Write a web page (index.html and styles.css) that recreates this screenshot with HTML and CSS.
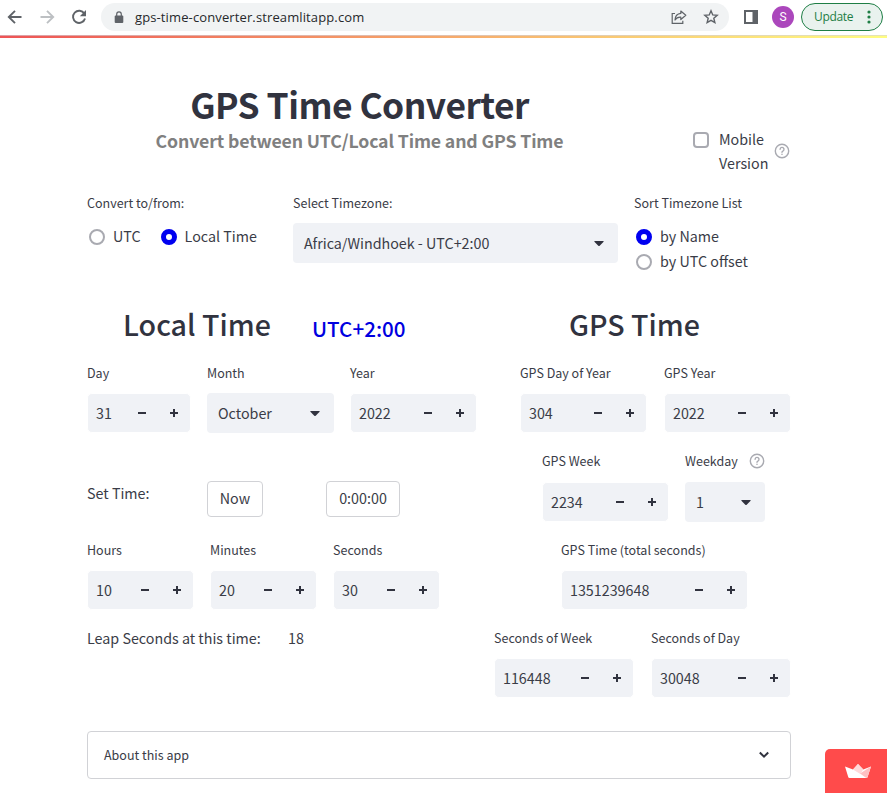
FILE: index.html
```html
<!DOCTYPE html>
<html lang="en">
<head>
<meta charset="utf-8">
<title>GPS Time Converter</title>
<link rel="stylesheet" href="styles.css">
</head>
<body>
<svg class="defs" width="0" height="0">
  <symbol id="minus" viewBox="0 0 8 8"><path d="M0 3h8v2H0z"/></symbol>
  <symbol id="plus" viewBox="0 0 8 8"><path d="M3 0h2v3H8v2H5V8H3V5H0V3h3z"/></symbol>
  <symbol id="caret" viewBox="0 0 10 6"><path d="M.8 0h8.400q.8.100.4.800L5.700 4.700q-.7.700-1.400 0L.4.800Q0 .1.800 0z"/></symbol>
  <symbol id="help" viewBox="0 0 16 16"><g fill="none" stroke="#a9aab1" stroke-width="1.400" stroke-linecap="round"><circle cx="8" cy="8" r="6.700"/><path d="M6.100 6.200a1.950 1.950 0 1 1 2.800 1.850c-.6.300-.9.600-.9 1.150M8 11.300v.1"/></g></symbol>
</svg>
<header class="toolbar">
  <nav class="nav">
    <svg width="16" height="16" viewBox="0 0 16 16" fill="none" stroke="#5f6368" stroke-width="1.900"><path d="M14.500 8H2M8 1.800L1.800 8 8 14.200"/></svg>
    <svg width="16" height="16" viewBox="0 0 16 16" fill="none" stroke="#bdc0c3" stroke-width="1.900"><path d="M1.500 8H14M8 1.800L14.200 8 8 14.200"/></svg>
    <svg width="16" height="16" viewBox="0 0 16 16"><path d="M13.300 4.600A6.100 6.100 0 1 0 14 9.500" fill="none" stroke="#5f6368" stroke-width="1.900"/><path d="M15 1v6.200H8.800z" fill="#5f6368"/></svg>
  </nav>
  <div class="omnibox">
    <svg width="10" height="13" viewBox="0 0 10 13"><rect x=".7" y="4.500" width="8.600" height="7.500" rx="1" fill="#5f6368"/><path d="M2.700 5V3.200a2.300 2.300 0 0 1 4.600 0V5" fill="none" stroke="#5f6368" stroke-width="1.200"/></svg>
    <span class="url">gps-time-converter.streamlitapp.com</span>
    <svg width="16" height="16" viewBox="0 0 16 16" fill="none" stroke="#5f6368" stroke-width="1.200"><path d="M4 4.500H1.200v9.800h10.600v-2.500"/><path d="M9.800 2l5 4.300-5 4.200V8.200C7 8 5.300 8.900 4 11c.2-3.700 2.200-6.200 5.800-6.600z" stroke-linejoin="round"/></svg>
    <svg class="star" width="16" height="16" viewBox="0 0 16 16" fill="none" stroke="#5f6368" stroke-width="1.400"><path d="M8 1.800l1.750 4.100 4.450.4-3.400 2.950 1.050 4.350L8 11.300l-3.850 2.300L5.200 9.250 1.800 6.300l4.450-.4z"/></svg>
  </div>
  <svg class="panel" width="14" height="14" viewBox="0 0 14 14"><path d="M0 0h14v14H0zM2 2v10h6.500V2z" fill="#5f6368" fill-rule="evenodd"/></svg>
  <span class="avatar">S</span>
  <span class="update"><span class="update-text">Update</span><svg width="4" height="14" viewBox="0 0 4 14" fill="#1e7e45"><circle cx="2" cy="2" r="1.600"/><circle cx="2" cy="7" r="1.600"/><circle cx="2" cy="12" r="1.600"/></svg></span>
</header>
<div class="rainbow"></div>
<main class="page">
  <section class="intro">
    <div class="titles">
      <h1>GPS Time Converter</h1>
      <p class="subtitle">Convert between UTC/Local Time and GPS Time</p>
    </div>
    <label class="mobile"><span class="box"></span><span class="mobile-text">Mobile Version</span><svg width="16" height="16"><use href="#help"/></svg></label>
  </section>
  <section class="options">
    <div class="field convert">
      <span class="label">Convert to/from:</span>
      <div class="radios inline"><span class="radio">UTC</span><span class="radio on">Local Time</span></div>
    </div>
    <div class="field timezone">
      <span class="label">Select Timezone:</span>
      <div class="select">Africa/Windhoek - UTC+2:00<svg width="10" height="6"><use href="#caret"/></svg></div>
    </div>
    <div class="field sort">
      <span class="label">Sort Timezone List</span>
      <div class="radios"><span class="radio on">by Name</span><span class="radio">by UTC offset</span></div>
    </div>
  </section>
  <section class="columns">
    <div class="local">
      <div class="heading"><h2>Local Time</h2><span class="offset">UTC+2:00</span></div>
      <div class="row date">
        <div class="field day"><span class="label">Day</span><div class="number"><span>31</span><svg><use href="#minus"/></svg><svg><use href="#plus"/></svg></div></div>
        <div class="field month"><span class="label">Month</span><div class="select">October<svg width="10" height="6"><use href="#caret"/></svg></div></div>
        <div class="field year"><span class="label">Year</span><div class="number"><span>2022</span><svg><use href="#minus"/></svg><svg><use href="#plus"/></svg></div></div>
      </div>
      <div class="row set-time"><span class="set-label">Set Time:</span><button class="now">Now</button><button class="zero">0:00:00</button></div>
      <div class="row time">
        <div class="field"><span class="label">Hours</span><div class="number"><span>10</span><svg><use href="#minus"/></svg><svg><use href="#plus"/></svg></div></div>
        <div class="field"><span class="label">Minutes</span><div class="number"><span>20</span><svg><use href="#minus"/></svg><svg><use href="#plus"/></svg></div></div>
        <div class="field"><span class="label">Seconds</span><div class="number"><span>30</span><svg><use href="#minus"/></svg><svg><use href="#plus"/></svg></div></div>
      </div>
      <div class="row leap"><span class="leap-label">Leap Seconds at this time:</span><span>18</span></div>
    </div>
    <div class="gps">
      <div class="heading"><h2>GPS Time</h2></div>
      <div class="row gps-date">
        <div class="field year"><span class="label">GPS Day of Year</span><div class="number"><span>304</span><svg><use href="#minus"/></svg><svg><use href="#plus"/></svg></div></div>
        <div class="field year"><span class="label">GPS Year</span><div class="number"><span>2022</span><svg><use href="#minus"/></svg><svg><use href="#plus"/></svg></div></div>
      </div>
      <div class="row gps-week">
        <div class="field year"><span class="label">GPS Week</span><div class="number"><span>2234</span><svg><use href="#minus"/></svg><svg><use href="#plus"/></svg></div></div>
        <div class="field weekday"><span class="label">Weekday<svg width="16" height="16"><use href="#help"/></svg></span><div class="select">1<svg width="10" height="6"><use href="#caret"/></svg></div></div>
      </div>
      <div class="row gps-total">
        <div class="field total"><span class="label">GPS Time (total seconds)</span><div class="number"><span>1351239648</span><svg><use href="#minus"/></svg><svg><use href="#plus"/></svg></div></div>
      </div>
      <div class="row gps-seconds">
        <div class="field"><span class="label">Seconds of Week</span><div class="number"><span>116448</span><svg><use href="#minus"/></svg><svg><use href="#plus"/></svg></div></div>
        <div class="field"><span class="label">Seconds of Day</span><div class="number"><span>30048</span><svg><use href="#minus"/></svg><svg><use href="#plus"/></svg></div></div>
      </div>
    </div>
  </section>
  <div class="expander">About this app<svg width="12" height="8" viewBox="0 0 12 8" fill="none" stroke="#31333f" stroke-width="2"><path d="M1.800 1.500L6 5.700l4.200-4.200"/></svg></div>
</main>
<div class="badge"><svg width="26" height="15" viewBox="0 0 26 15"><path d="M0 2.500L8 5.500 13 0l5.300 5.500L26 2.500 22.500 13.300q-.3.800-1.200.8H4.500q-.9 0-1.200-.8z" fill="#fff"/><path d="M13 0l5.300 5.500-3 4.500L8 5.500z" fill="#ffd9da"/><path d="M26 2.500L22.500 13.300q-.3.800-1.200.8L15 9.500z" fill="#ffc0c2"/></svg></div>
</body>
</html>
```
FILE: styles.css
```css
*, *::before { box-sizing: border-box; }
body {
  margin: 0;
  height: 793px;
  overflow: hidden;
  background: #fff;
  color: #3a3c47;
  font: 14.3px/24px "Noto Sans CJK SC", "Open Sans", sans-serif;
  white-space: nowrap;
}
.defs { display: block; height: 0; }
svg { flex: none; display: block; }
h1, h2, p { margin: 0; }
h1, h2 { color: #31333f; }

.toolbar { display: flex; align-items: center; height: 35px; font-family: "Open Sans", sans-serif; }
.nav { display: flex; gap: 16px; padding: 0 0 1px 7px; }
.omnibox {
  display: flex;
  align-items: center;
  width: 628px;
  height: 28px;
  margin: 0 0 1px 14px;
  padding: 0 10px 0 13px;
  border-radius: 14px;
  background: #f1f3f4;
}
.url { flex: 1; margin-left: 11px; font-size: 13px; letter-spacing: .12px; color: #26282b; }
.star { margin-left: 16px; }
.panel { margin: 0 0 1px 15px; }
.avatar {
  width: 22px;
  height: 22px;
  margin: 0 0 1px 14px;
  border-radius: 50%;
  background: #ab47bc;
  color: #fff;
  font: 12px/22px Roboto, sans-serif;
  text-align: center;
}
.update {
  display: flex;
  align-items: center;
  justify-content: space-between;
  width: 82px;
  height: 28px;
  margin: 0 0 1px 7px;
  padding: 0 11px 0 12px;
  border: 1px solid #1e7e45;
  border-radius: 14px;
  background: #e9f2ee;
  color: #1e7e45;
  font-size: 12px;
}
.update-text { letter-spacing: -.35px; }
.rainbow { height: 3px; background: linear-gradient(90deg, #ee5455, #fffd80); border-top: 1px solid rgba(210, 210, 220, .6); }

.page { width: 704px; margin-left: 87px; }
.intro { display: flex; height: 153px; padding-top: 38px; }
.titles { width: 545px; text-align: center; }
h1 { font-size: 35.4px; line-height: 56px; font-weight: 700; letter-spacing: -.55px; }
.subtitle { margin-top: -5px; font-size: 17.7px; line-height: 26px; font-weight: 700; letter-spacing: -.14px; color: #808080; }
.mobile { display: flex; align-items: flex-start; width: 97px; margin: 51px 0 0 61px; }
.mobile .box { width: 16px; height: 16px; margin-top: 5px; border: 2px solid #a9aab1; border-radius: 4px; }
.mobile-text { width: 50px; margin-left: 10px; white-space: normal; }
.mobile svg { margin: 16px 0 0 5px; }

.options { display: flex; height: 109px; }
.label { display: flex; align-items: center; height: 24px; margin-bottom: 8px; font-size: 12.5px; }
.label svg { margin-left: 11px; }
.convert { width: 206px; }
.timezone { width: 325px; }
.sort { margin-left: 16px; }
.radios { display: flex; flex-direction: column; gap: 1px; padding: 1px 0 0 2px; }
.radios.inline { flex-direction: row; gap: 20px; }
.radio { display: flex; align-items: center; gap: 8px; }
.radio::before { content: ""; width: 16px; height: 16px; margin-top: 1px; border: 2px solid #a9aab1; border-radius: 50%; }
.radio.on::before { border: 5px solid #0000f0; }
.select {
  display: flex;
  align-items: center;
  justify-content: space-between;
  height: 40px;
  padding: 0 14px 0 11px;
  border-radius: 4px;
  background: #f0f2f6;
}
.select svg, .number svg { fill: #31333f; }
.select svg { margin-top: 1px; }
.number {
  display: flex;
  align-items: center;
  height: 40px;
  padding-left: 8px;
  border: 1px solid #fff;
  border-radius: 5px;
  background: #f0f2f6;
}
.number span { flex: 1; }
.number svg { width: 8px; height: 8px; margin: 0 12px; }

.columns { display: flex; height: 431px; }
.local { width: 407px; }
.gps { width: 297px; }
.heading { display: flex; height: 61px; }
h2 { font-size: 28.6px; line-height: 48px; font-weight: 500; }
.local h2 { width: 148px; margin-left: 36px; }
.gps h2 { margin-left: 75px; }
.offset { margin-left: 41px; padding-top: 10px; color: #0000e0; font-size: 20.6px; line-height: 36px; font-weight: 500; }
.row { display: flex; }
.date { gap: 16px; height: 120px; }
.day { width: 104px; }
.month { width: 127px; }
.year { width: 127px; }
.set-time { height: 57px; }
.set-label { width: 120px; }
button {
  height: 36px;
  padding: 0 0 2px;
  border: 1px solid #d1d2d6;
  border-radius: 4px;
  background: #fff;
  color: inherit;
  font: inherit;
}
.now { width: 56px; }
.zero { width: 74px; margin-left: 63px; }
.time { gap: 16px; height: 88px; }
.time .field { width: 107px; }
.leap-label { width: 201px; }
.gps-date { gap: 17px; height: 88px; padding-left: 26px; }
.gps-week { gap: 16px; height: 89px; padding-left: 48px; }
.gps-week .label { margin-bottom: 9px; }
.weekday { width: 80px; }
.gps-total { height: 88px; padding-left: 67px; }
.total { width: 187px; }
.gps-seconds { gap: 17px; }
.gps-seconds .field { width: 140px; }

.expander {
  display: flex;
  align-items: center;
  justify-content: space-between;
  height: 48px;
  padding: 0 20px 0 16px;
  border: 1px solid #d1d2d6;
  border-radius: 4px;
  font-size: 12.5px;
}
.badge {
  position: fixed;
  right: 0;
  bottom: 0;
  width: 62px;
  height: 44px;
  padding: 15px 0 0 20px;
  border-radius: 5px 0 0 0;
  background: #ff4b4b;
}
```
